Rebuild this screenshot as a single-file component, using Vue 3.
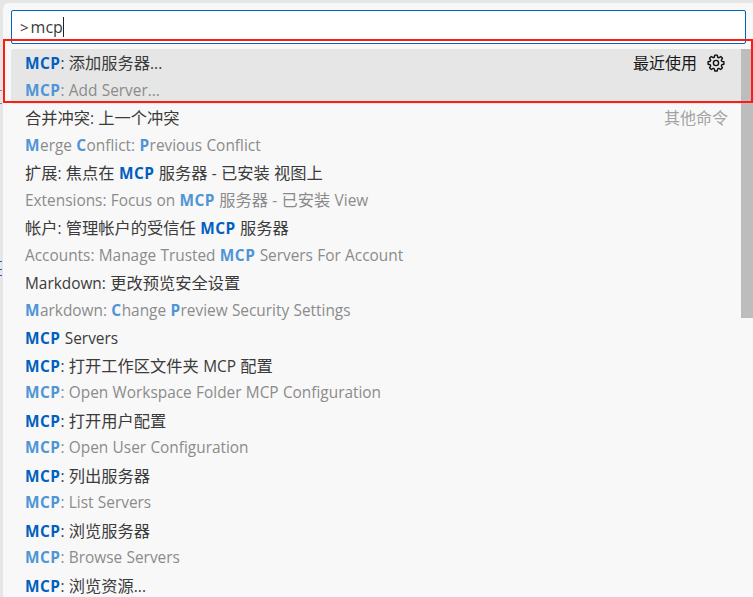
<script setup>
const rows = [
  { main: [['MCP', 1], [': 添加服务器...', 0]], sub: [['MCP', 1], [': Add Server...', 0]], selected: true },
  { main: [['合并冲突: 上一个冲突', 0]], sub: [['M', 1], ['erge ', 0], ['C', 1], ['onflict: ', 0], ['P', 1], ['revious Conflict', 0]], other: true },
  { main: [['扩展: 焦点在 ', 0], ['MCP', 1], [' 服务器 - 已安装 视图上', 0]], sub: [['Extensions: Focus on ', 0], ['MCP', 1], [' 服务器 - 已安装 View', 0]] },
  { main: [['帐户: 管理帐户的受信任 ', 0], ['MCP', 1], [' 服务器', 0]], sub: [['Accounts: Manage Trusted ', 0], ['MCP', 1], [' Servers For Account', 0]] },
  { main: [['Markdown: 更改预览安全设置', 0]], sub: [['M', 1], ['arkdown: ', 0], ['C', 1], ['hange ', 0], ['P', 1], ['review Security Settings', 0]] },
  { main: [['MCP', 1], [' Servers', 0]] },
  { main: [['MCP', 1], [': 打开工作区文件夹 MCP 配置', 0]], sub: [['MCP', 1], [': Open Workspace Folder MCP Configuration', 0]] },
  { main: [['MCP', 1], [': 打开用户配置', 0]], sub: [['MCP', 1], [': Open User Configuration', 0]] },
  { main: [['MCP', 1], [': 列出服务器', 0]], sub: [['MCP', 1], [': List Servers', 0]] },
  { main: [['MCP', 1], [': 浏览服务器', 0]], sub: [['MCP', 1], [': Browse Servers', 0]] },
  { main: [['MCP', 1], [': 浏览资源...', 0]] },
]
const parts = (t) => t.split(/([\u4e00-\u9fff]+)/).filter(Boolean)
const isCjk = (p) => /[\u4e00-\u9fff]/.test(p)
</script>

<template>
  <div class="stage">
    <div class="mark grey m1"></div>
    <div class="mark grey m2"></div>
    <div class="mark blue m3"></div>
    <div class="mark blue m4"></div>
    <div class="mark blue m5"></div>
    <div class="panel">
      <div class="input"><span class="gt">&gt;</span><span class="prompt">mcp</span><span class="caret"></span></div>
      <div class="list">
        <div v-for="(r, i) in rows" :key="i" class="row" :class="{ selected: r.selected }">
          <div class="line main">
            <span class="label"><span v-for="(s, j) in r.main" :key="j" :class="{ hl: s[1] }"><span v-for="(p, k) in parts(s[0])" :key="k" :class="{ cjk: isCjk(p) }">{{ p }}</span></span></span>
            <span v-if="r.selected" class="meta">最近使用
              <svg class="gear" width="18" height="18" viewBox="0 0 16 16" fill="none" stroke="#111" stroke-width="1.25" stroke-linejoin="round">
                <path d="M6.9 1h2.2l.4 1.9 1.05.43 1.65-1.05 1.55 1.55-1.05 1.65.43 1.05 1.9.4v2.2l-1.9.4-.43 1.05 1.05 1.65-1.55 1.55-1.65-1.05-1.05.43-.4 1.9H6.9l-.4-1.9-1.05-.43-1.65 1.05-1.55-1.55 1.05-1.65-.43-1.05-1.9-.4V6.9l1.9-.4.43-1.05-1.05-1.65 1.55-1.55 1.65 1.05 1.05-.43z" />
                <circle cx="8" cy="8" r="2.3" />
              </svg>
            </span>
            <span v-if="r.other" class="other">其他命令</span>
          </div>
          <div v-if="r.sub" class="line sub">
            <span v-for="(s, j) in r.sub" :key="j" :class="{ hl: s[1] }"><span v-for="(p, k) in parts(s[0])" :key="k" :class="{ cjk: isCjk(p) }">{{ p }}</span></span>
          </div>
        </div>
      </div>
      <div class="scrollbar"></div>
    </div>
    <div class="redbox"></div>
  </div>
</template>

<style>
html, body { margin: 0; background: #e5e5e5; overflow: hidden; }
</style>

<style scoped>
.stage {
  position: relative;
  width: 753px;
  height: 597px;
  overflow: hidden;
  background: #e6e6e6;
  padding: 3px 0 0 3px;
  box-sizing: border-box;
  font-family: "Open Sans", "Noto Sans CJK SC", sans-serif;
  font-size: 15.4px;
  word-spacing: .3px;
  color: #3b3b3b;
}
.mark { position: absolute; left: 0; width: 2px; height: 1px; }
.grey { background: #8a8a8a; }
.blue { background: #1a5fd0; }
.m1 { top: 90px; }
.m2 { top: 103px; }
.m3 { top: 261px; }
.m4 { top: 269px; }
.m5 { top: 275px; }
.panel {
  position: relative;
  height: 100%;
  background: #f8f8f8;
  border-radius: 6px 0 0 0;
  padding: 7px 7px 0 8px;
  box-sizing: border-box;
}
.input {
  height: 34px;
  box-sizing: border-box;
  background: #fff;
  border: 1px solid #0063bd;
  border-radius: 2px;
  display: flex;
  align-items: center;
  padding-left: 8px;
  color: #3b3b3b;
  font-size: 16px;
}
.gt { margin-right: 2px; font-size: 15px; }
.caret { width: 1px; height: 20px; background: #222; }
.list { margin-top: 5px; margin-right: 5px; }
.row { padding: 0 0 0 14px; }
.row.selected { background: #e6e6e6; border-radius: 3px 0 0 3px; }
.line { height: 27.5px; white-space: nowrap; }
.main { display: flex; justify-content: space-between; padding-right: 13px; color: #3b3b3b; line-height: 30px; }
.sub { color: #8b8b8b; line-height: 28px; }
.cjk { font-size: 16.25px; line-height: 1; }
.hl { letter-spacing: .5px; }
.main .hl { color: #0060c0; font-weight: 700; }
.sub .hl { color: #4f95d6; font-weight: 700; }
.meta { display: flex; align-items: center; gap: 10px; color: #1a1a1a; font-size: 16px; margin-right: 3px; height: 28px; }
.gear { display: block; }
.other { color: #a3a3a3; font-size: 16px; line-height: 28px; }
.scrollbar {
  position: absolute;
  right: 0;
  top: 46px;
  width: 12px;
  height: 269px;
  background: rgba(100, 100, 100, .4);
}
.redbox {
  position: absolute;
  left: 3px;
  top: 39px;
  width: 746px;
  height: 60px;
  border: 2px solid #ff1a12;
  pointer-events: none;
}
</style>
